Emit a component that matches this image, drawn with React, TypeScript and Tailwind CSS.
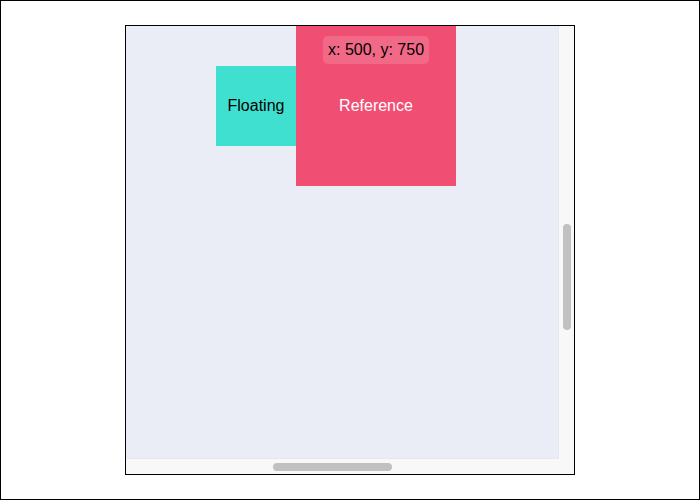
export default function App() {
  return (
    <div
      className="h-[500px] w-[700px] border border-black bg-white"
      style={{ fontFamily: '"Liberation Sans", Arial, sans-serif' }}
    >
      <div className="ml-[124px] mt-[24px] grid h-[450px] w-[450px] grid-cols-[433px_15px] grid-rows-[433px_15px] border border-black bg-[#f8f8f8]">
        {/* scroll viewport */}
        <div className="relative overflow-hidden border-r border-b border-[#e8e8ec] bg-[#eaedf5]">
          {/* reference element */}
          <div className="absolute left-[170px] top-0 flex h-[160px] w-[160px] items-center justify-center bg-[#f04f73] text-white">
            <div className="absolute left-[27px] top-[10px] whitespace-nowrap rounded-[5px] bg-white/15 px-[5px] py-[5px] text-[16px] leading-[18px] text-black">
              x: 500, y: 750
            </div>
            <span className="text-[16px]">Reference</span>
          </div>
          {/* floating element */}
          <div className="absolute left-[90px] top-[40px] flex h-[80px] w-[80px] items-center justify-center bg-[#40e0d0] text-[16px] text-black">
            Floating
          </div>
        </div>

        {/* vertical scrollbar */}
        <div className="flex justify-center pt-[198px]">
          <div className="h-[106px] w-[8px] rounded-full bg-[#c1c1c1]" />
        </div>

        {/* horizontal scrollbar */}
        <div className="flex items-center pl-[147px]">
          <div className="h-[8px] w-[119px] rounded-full bg-[#c1c1c1]" />
        </div>

        <div />
      </div>
    </div>
  )
}
